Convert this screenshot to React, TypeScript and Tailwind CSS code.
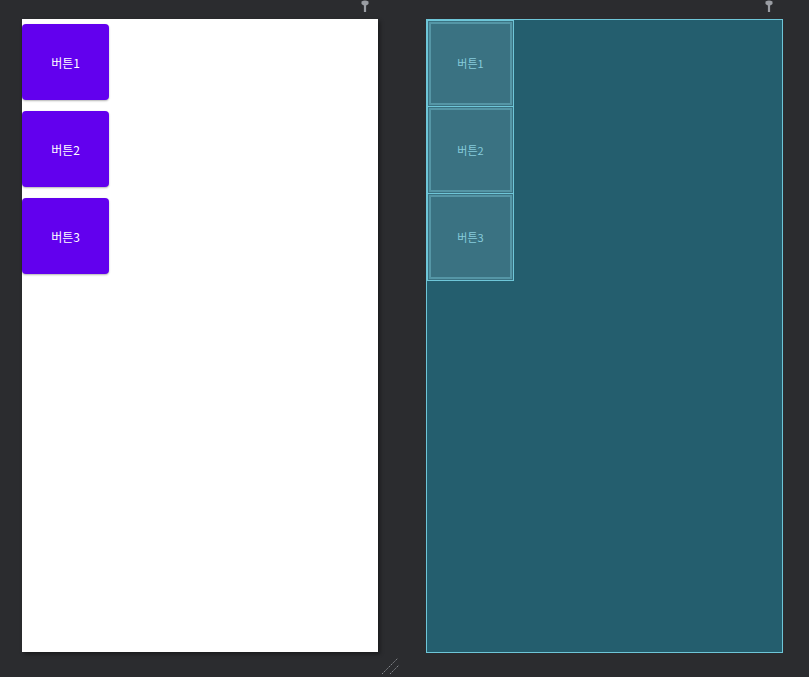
import React from "react";

const labels = ["버튼1", "버튼2", "버튼3"];

function Pin() {
  return (
    <svg width="10" height="12" viewBox="0 0 10 12">
      <path d="M1.5 1.5 Q5 -0.5 8.5 1.5 L8.5 4 Q5 7 1.5 4 Z" fill="#9a9da3" />
      <rect x="3.9" y="5" width="2.2" height="7" fill="#9a9da3" />
    </svg>
  );
}

export default function App() {
  return (
    <div
      className="relative h-[677px] w-[809px] overflow-hidden bg-[#2b2c2f]"
      style={{ fontFamily: '"Noto Sans CJK KR", "Noto Sans", sans-serif' }}
    >
      <div className="absolute left-[360px] top-0">
        <Pin />
      </div>
      <div className="absolute left-[764px] top-0">
        <Pin />
      </div>

      <div className="flex gap-[48px] pl-[22px] pt-[19px]">
        {/* design view */}
        <div className="flex h-[633px] w-[356px] flex-col bg-white shadow-[2px_2px_4px_rgba(0,0,0,0.4)]">
          {labels.map((l) => (
            <div key={l} className="pb-[6px] pt-[5px]">
              <div className="flex h-[76px] w-[87px] items-center justify-center rounded-[4px] bg-[#6200ee] pt-px text-[12px] text-white shadow-[0_1px_2px_rgba(0,0,0,0.3)]">
                {l}
              </div>
            </div>
          ))}
        </div>

        {/* blueprint view */}
        <div className="flex h-[634px] w-[357px] flex-col border border-[#6ec6d8] bg-[#245e6e]">
          {labels.map((l, i) => (
            <div
              key={l}
              className={
                "w-[87px] border border-[#6ec6d8] bg-[#3a7282] p-[1px] " +
                (i === 0 ? "h-[87px]" : "-mt-px h-[88px]")
              }
            >
              <div className="flex h-full w-full items-center justify-center border-2 border-[#5596a6] text-[11px] text-[#86cbdb]">
                {l}
              </div>
            </div>
          ))}
        </div>
      </div>

      <svg className="absolute left-[380px] top-[654px]" width="22" height="22" viewBox="0 0 22 22">
        <line x1="2" y1="20" x2="18" y2="4" stroke="#8a8d92" strokeWidth="1" strokeDasharray="1.5 1" />
        <line x1="10" y1="20" x2="19" y2="11" stroke="#8a8d92" strokeWidth="1" strokeDasharray="1.5 1" />
      </svg>
    </div>
  );
}
